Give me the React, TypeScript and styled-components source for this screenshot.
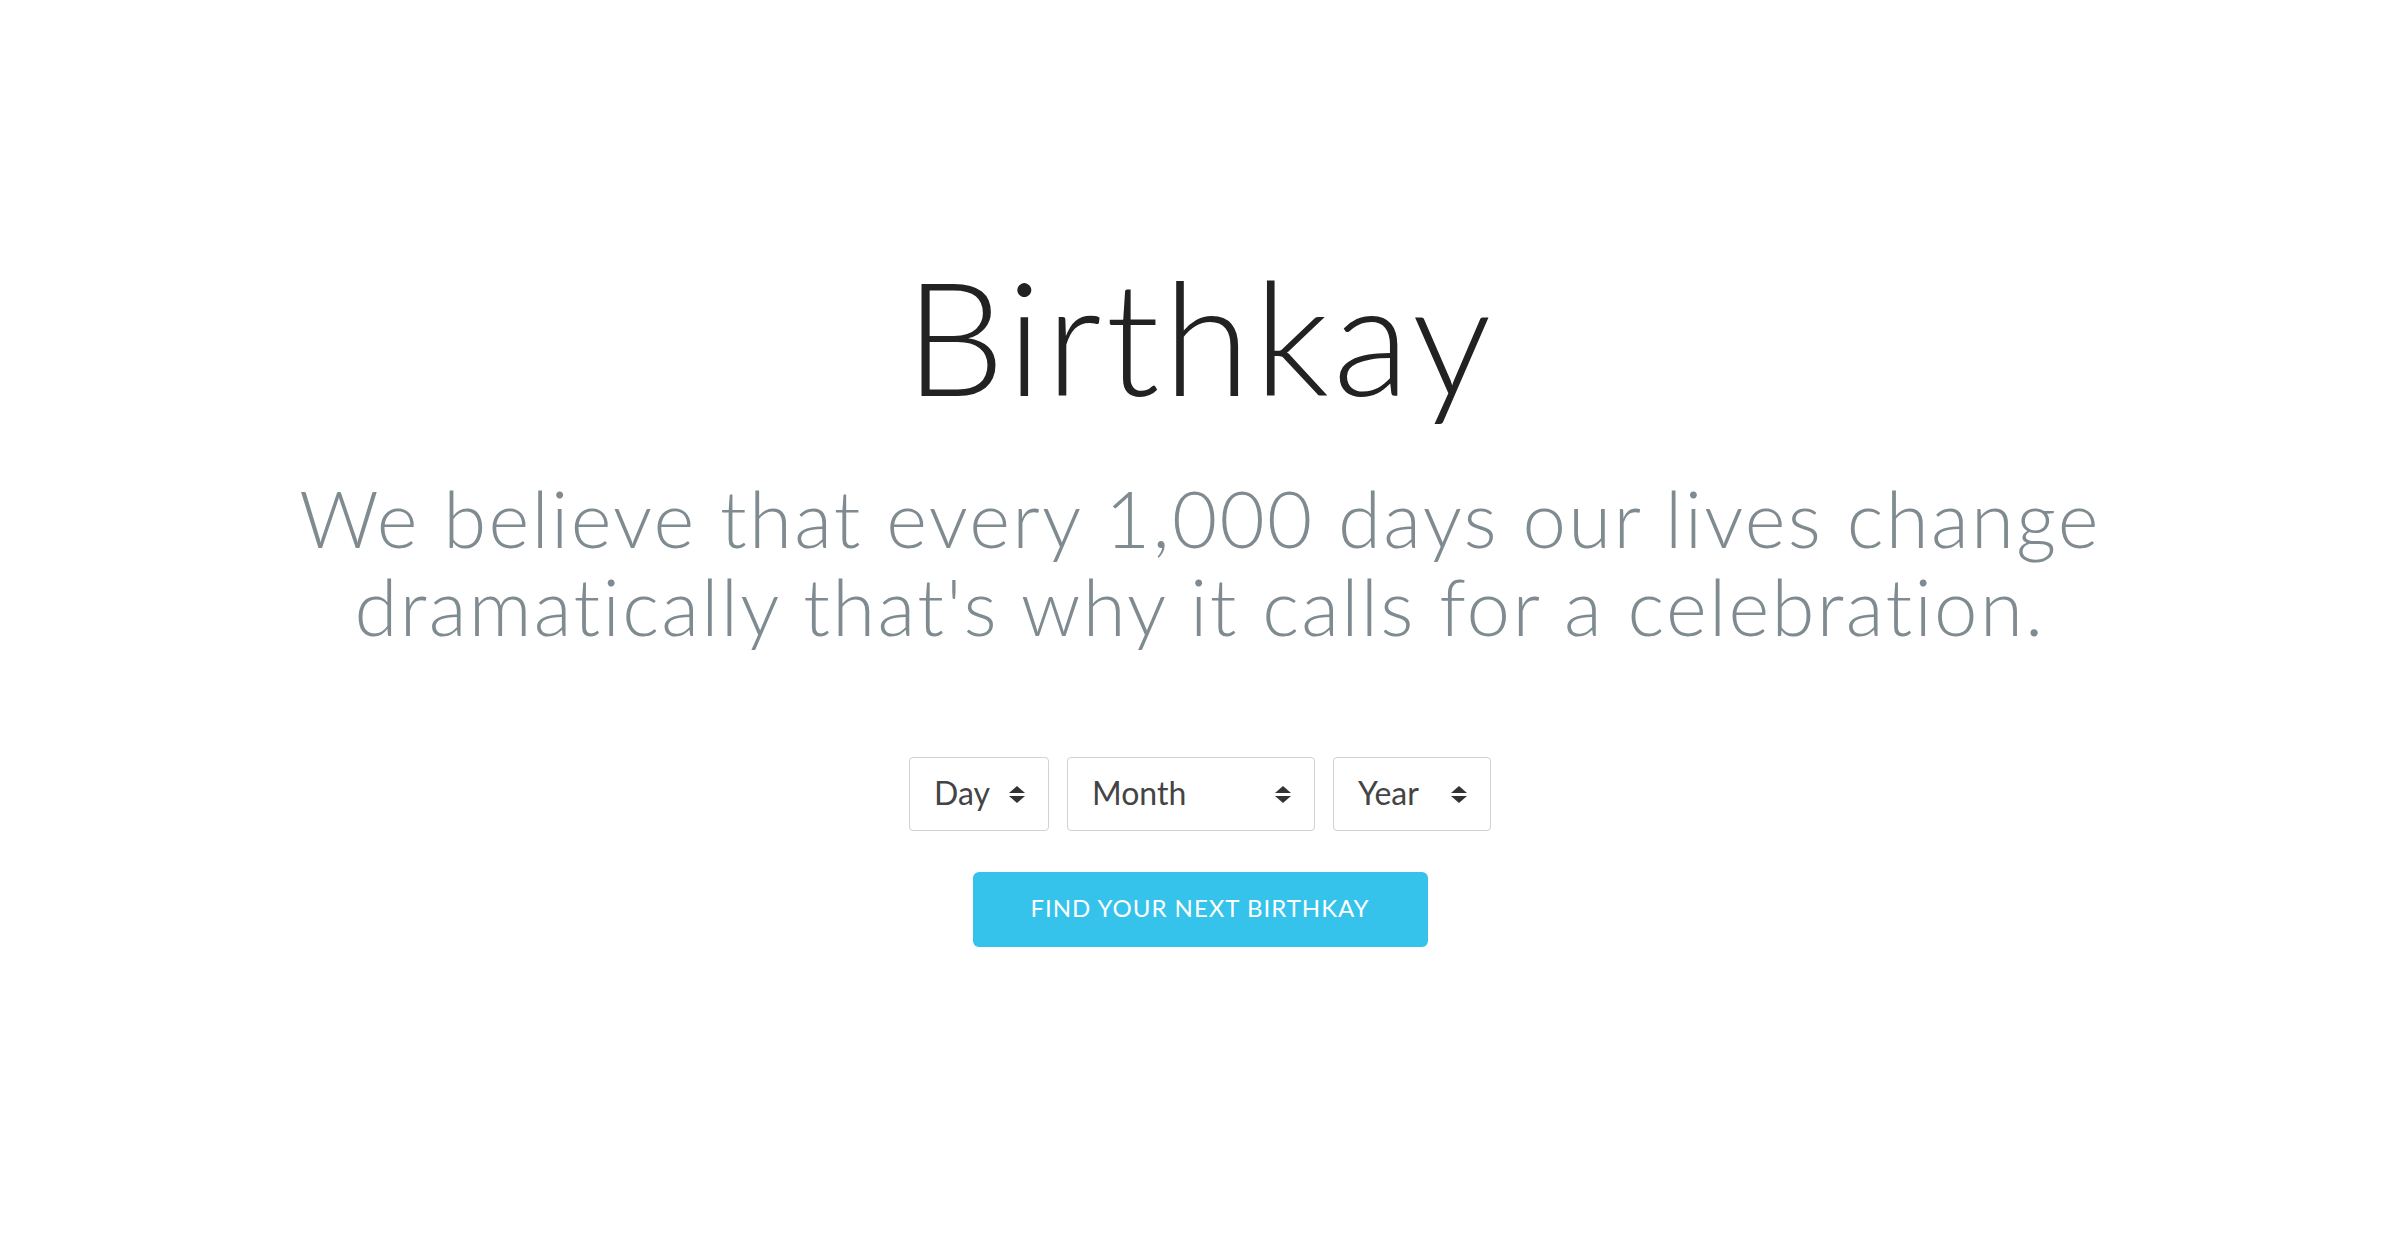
import React, { useState } from "react";
import styled, { createGlobalStyle } from "styled-components";

const GlobalStyle = createGlobalStyle`
    html, body {
        margin: 0;
        padding: 0;
        background: #ffffff;
    }

    body {
        font-family: "Lato", "Liberation Sans", sans-serif;
        font-variant-ligatures: none;
        -webkit-font-smoothing: antialiased;
    }
`;

const Page = styled.main`
    display: flex;
    flex-direction: column;
    align-items: center;
    min-height: 100vh;
    padding-top: 256px;
    box-sizing: border-box;
    text-align: center;
`;

const Title = styled.h1`
    margin: 0;
    font-family: "Lato", sans-serif;
    font-weight: 300;
    font-size: 158px;
    line-height: 1;
    letter-spacing: 3.8px;
    color: #222222;
`;

const Tagline = styled.p`
    margin: 60px 0 0;
    font-family: "Lato", sans-serif;
    font-weight: 300;
    font-size: 78px;
    line-height: 88px;
    letter-spacing: 2.3px;
    color: #7f8b90;
`;

const DateForm = styled.form`
    display: flex;
    flex-direction: column;
    align-items: center;
    gap: 41px;
    margin-top: 107px;
`;

const SelectRow = styled.div`
    display: flex;
    gap: 18px;
`;

const SelectWrap = styled.label<{ $width: number }>`
    position: relative;
    display: block;
    width: ${({ $width }) => $width}px;
    height: 74px;
`;

const Select = styled.select`
    appearance: none;
    -webkit-appearance: none;
    width: 100%;
    height: 100%;
    box-sizing: border-box;
    margin: 0;
    padding: 0 40px 4px 24px;
    border: 1px solid #d2d2d2;
    border-radius: 4px;
    background: #ffffff;
    font-family: "Lato", sans-serif;
    font-size: 32px;
    color: #444444;
    cursor: pointer;
    outline: none;
`;

const Arrows = styled.svg`
    position: absolute;
    top: 50%;
    right: 24px;
    width: 16px;
    height: 17px;
    margin-top: -8px;
    pointer-events: none;
`;

const SubmitButton = styled.button`
    width: 455px;
    height: 75px;
    padding: 0 0 4px;
    border: none;
    border-radius: 6px;
    background: #35c3ec;
    color: #ffffff;
    font-family: "Lato", sans-serif;
    font-weight: 400;
    font-size: 24px;
    letter-spacing: 1px;
    text-transform: uppercase;
    cursor: pointer;
`;

const SortArrows = () => (
    <Arrows viewBox="0 0 16 17">
        <path d="M8 0 L16 7 L0 7 Z" fill="#333333" />
        <path d="M0 10 L16 10 L8 17 Z" fill="#333333" />
    </Arrows>
);

const MONTHS = [
    "January", "February", "March", "April", "May", "June",
    "July", "August", "September", "October", "November", "December",
];

const days = Array.from({ length: 31 }, (_, i) => i + 1);
const years = Array.from({ length: 100 }, (_, i) => 2016 - i);

const App: React.FC = () => {
    const [day, setDay] = useState("");
    const [month, setMonth] = useState("");
    const [year, setYear] = useState("");

    return (
        <>
            <GlobalStyle />
            <Page>
                <Title>Birthkay</Title>
                <Tagline>
                    We believe that every 1,000 days our lives change
                    <br />
                    dramatically that's why it calls for a celebration.
                </Tagline>

                <DateForm onSubmit={(e) => e.preventDefault()}>
                    <SelectRow>
                        <SelectWrap $width={140}>
                            <Select value={day} onChange={(e) => setDay(e.target.value)}>
                                <option value="">Day</option>
                                {days.map((d) => (
                                    <option key={d} value={d}>{d}</option>
                                ))}
                            </Select>
                            <SortArrows />
                        </SelectWrap>
                        <SelectWrap $width={248}>
                            <Select value={month} onChange={(e) => setMonth(e.target.value)}>
                                <option value="">Month</option>
                                {MONTHS.map((m) => (
                                    <option key={m} value={m}>{m}</option>
                                ))}
                            </Select>
                            <SortArrows />
                        </SelectWrap>
                        <SelectWrap $width={158}>
                            <Select value={year} onChange={(e) => setYear(e.target.value)}>
                                <option value="">Year</option>
                                {years.map((y) => (
                                    <option key={y} value={y}>{y}</option>
                                ))}
                            </Select>
                            <SortArrows />
                        </SelectWrap>
                    </SelectRow>
                    <SubmitButton type="submit">Find your next Birthkay</SubmitButton>
                </DateForm>
            </Page>
        </>
    );
};

export default App;
